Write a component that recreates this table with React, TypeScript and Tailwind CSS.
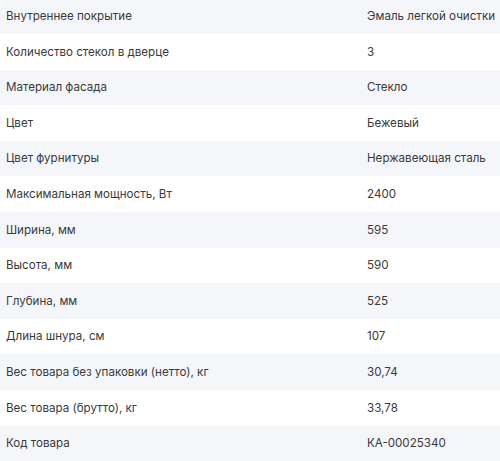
const rows: [string, string][] = [
  ["Внутреннее покрытие", "Эмаль легкой очистки"],
  ["Количество стекол в дверце", "3"],
  ["Материал фасада", "Стекло"],
  ["Цвет", "Бежевый"],
  ["Цвет фурнитуры", "Нержавеющая сталь"],
  ["Максимальная мощность, Вт", "2400"],
  ["Ширина, мм", "595"],
  ["Высота, мм", "590"],
  ["Глубина, мм", "525"],
  ["Длина шнура, см", "107"],
  ["Вес товара без упаковки (нетто), кг", "30,74"],
  ["Вес товара (брутто), кг", "33,78"],
  ["Код товара", "КА-00025340"],
];

export default function App() {
  return (
    <div className="w-[500px] h-[461px] overflow-hidden bg-white font-['Inter',sans-serif] text-[11.6px] text-[#3a3a3a]">
      <div className="-mt-[1.6px]">
        {rows.map(([name, value], i) => (
          <div
            key={name}
            className={`flex items-center h-[35.6px] whitespace-nowrap ${i % 2 === 0 ? "bg-[#f5f6fa]" : "bg-white"}`}
          >
            <div className="w-[367px] pl-[6px] pt-[1px]">{name}</div>
            <div className="flex-1 pt-[1px]">{value}</div>
          </div>
        ))}
      </div>
    </div>
  );
}
